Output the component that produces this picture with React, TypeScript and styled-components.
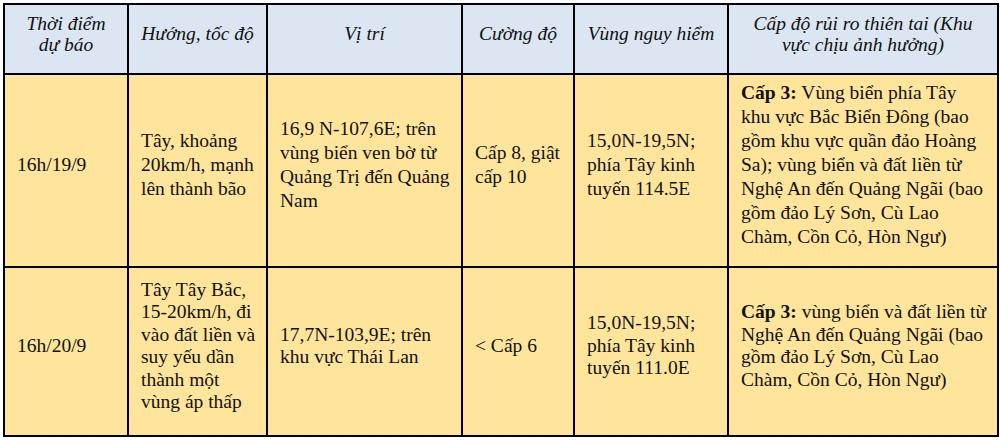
import { createGlobalStyle, styled } from 'styled-components';

interface Row {
    time: string[];
    direction: string[];
    position: string[];
    strength: string[];
    danger: string[];
    riskLevel: string;
    riskArea: string[];
    height: number;
    lineHeight: number;
}

// tiêu đề cột, xuống dòng giống bản gốc
const headers = [
    ['Thời điểm', 'dự báo'],
    ['Hướng, tốc độ'],
    ['Vị trí'],
    ['Cường độ'],
    ['Vùng nguy hiểm'],
    ['Cấp độ rủi ro thiên tai (Khu', 'vực chịu ảnh hưởng)'],
];

const colWidths = [124, 139, 195, 112, 154, 270];

const rows: Row[] = [
    {
        time: ['16h/19/9'],
        direction: ['Tây, khoảng', '20km/h, mạnh', 'lên thành bão'],
        position: ['16,9 N-107,6E; trên', 'vùng biển ven bờ từ', 'Quảng Trị đến Quảng', 'Nam'],
        strength: ['Cấp 8, giật', 'cấp 10'],
        danger: ['15,0N-19,5N;', 'phía Tây kinh', 'tuyến 114.5E'],
        riskLevel: 'Cấp 3:',
        riskArea: [
            ' Vùng biển phía Tây',
            'khu vực Bắc Biển Đông (bao',
            'gồm khu vực quần đảo Hoàng',
            'Sa); vùng biển và đất liền từ',
            'Nghệ An đến Quảng Ngãi (bao',
            'gồm đảo Lý Sơn, Cù Lao',
            'Chàm, Cồn Cỏ, Hòn Ngư)',
        ],
        height: 193,
        lineHeight: 24,
    },
    {
        time: ['16h/20/9'],
        direction: ['Tây Tây Bắc,', '15-20km/h, đi', 'vào đất liền và', 'suy yếu dần', 'thành một', 'vùng áp thấp'],
        position: ['17,7N-103,9E; trên', 'khu vực Thái Lan'],
        strength: ['< Cấp 6'],
        danger: ['15,0N-19,5N;', 'phía Tây kinh', 'tuyến 111.0E'],
        riskLevel: 'Cấp 3:',
        riskArea: [
            ' vùng biển và đất liền từ',
            'Nghệ An đến Quảng Ngãi (bao',
            'gồm đảo Lý Sơn, Cù Lao',
            'Chàm, Cồn Cỏ, Hòn Ngư)',
        ],
        height: 169,
        lineHeight: 22.5,
    },
];

function Lines({ lines }: { lines: string[] }) {
    return (
        <>
            {lines.map((line, i) => (
                <LineStyle key={i}>{line}</LineStyle>
            ))}
        </>
    );
}

function App() {
    return (
        <>
            <GlobalStyle />
            <PageStyle>
                <TableStyle>
                    <colgroup>
                        {colWidths.map((w, i) => (
                            <col key={i} style={{ width: w }} />
                        ))}
                    </colgroup>
                    <thead>
                        <HeadRowStyle>
                            {headers.map((h) => (
                                <HeadCellStyle key={h[0]}>
                                    <Lines lines={h} />
                                </HeadCellStyle>
                            ))}
                        </HeadRowStyle>
                    </thead>
                    <tbody>
                        {rows.map((row) => {
                            const [first, ...rest] = row.riskArea;
                            return (
                                <BodyRowStyle key={row.time[0]} $height={row.height} $lineHeight={row.lineHeight}>
                                    <CellStyle><Lines lines={row.time} /></CellStyle>
                                    <CellStyle><Lines lines={row.direction} /></CellStyle>
                                    <CellStyle><Lines lines={row.position} /></CellStyle>
                                    <CellStyle><Lines lines={row.strength} /></CellStyle>
                                    <CellStyle><Lines lines={row.danger} /></CellStyle>
                                    <CellStyle>
                                        <LineStyle>
                                            <strong>{row.riskLevel}</strong>
                                            <span>{first}</span>
                                        </LineStyle>
                                        <Lines lines={rest} />
                                    </CellStyle>
                                </BodyRowStyle>
                            );
                        })}
                    </tbody>
                </TableStyle>
            </PageStyle>
        </>
    );
}

const GlobalStyle = createGlobalStyle`
    body {
        margin: 0;
        background: #fff;
        font-family: "Liberation Serif", "Times New Roman", serif;
        color: #111;
    }
`;

const PageStyle = styled.div`
    padding: 3px;
`;

const TableStyle = styled.table`
    width: 995px;
    table-layout: fixed;
    border-collapse: collapse;
    border: 2px solid #000;
    font-size: 19.5px;
`;

const LineStyle = styled.div`
    white-space: pre;
`;

const HeadRowStyle = styled.tr`
    height: 70px;
    background: #dce6f2;
`;

const HeadCellStyle = styled.th`
    border: 2px solid #000;
    font-weight: normal;
    font-style: italic;
    line-height: 21px;
    text-align: center;
    vertical-align: middle;
    padding: 0 4px 11px;
`;

interface BodyRowStyleProps {
    $height: number;
    $lineHeight: number;
}

const BodyRowStyle = styled.tr<BodyRowStyleProps>`
    height: ${(props) => props.$height}px;
    line-height: ${(props) => props.$lineHeight}px;
    background: #fee59b;
`;

const CellStyle = styled.td`
    border: 2px solid #000;
    text-align: left;
    vertical-align: middle;
    padding: 0 4px 11px 12px;

    strong {
        font-weight: bold;
    }
`;

export default App;
